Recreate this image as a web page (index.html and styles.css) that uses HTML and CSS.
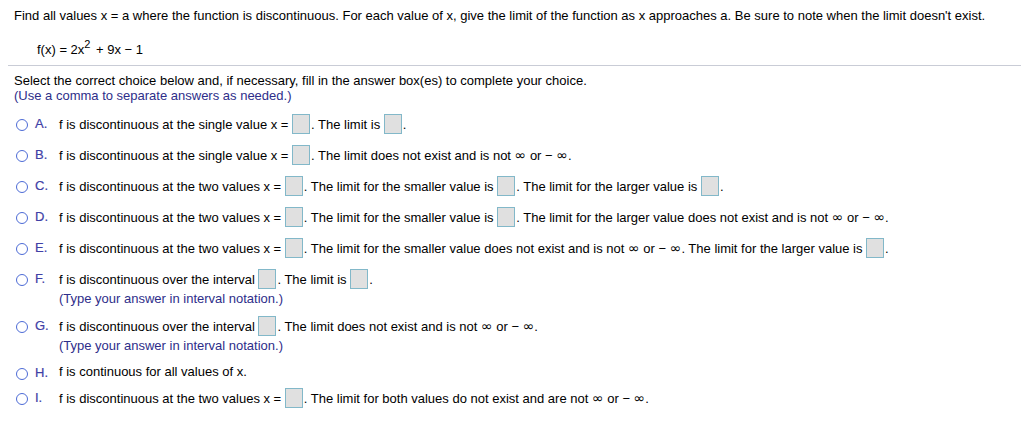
FILE: index.html
```html
<!DOCTYPE html>
<html>
<head>
<meta charset="utf-8">
<link rel="stylesheet" href="styles.css">
</head>
<body>
<div class="page">
  <p class="q">Find all values x = a where the function is discontinuous. For each value of x, give the limit of the function as x approaches a. Be sure to note when the limit doesn't exist.</p>
  <p class="fn">f(x) = 2x<sup>2</sup> + 9x − 1</p>
  <div class="sep"></div>
  <p class="inst">Select the correct choice below and, if necessary, fill in the answer box(es) to complete your choice.</p>
  <p class="note">(Use a comma to separate answers as needed.)</p>
  <ul class="choices">
    <li class="choice"><span class="radio"></span><span class="letter">A.</span>
      <div class="body"><div class="line">f is discontinuous at the single value x = <span class="box"></span>. The limit is <span class="box"></span>.</div></div></li>
    <li class="choice"><span class="radio"></span><span class="letter">B.</span>
      <div class="body"><div class="line">f is discontinuous at the single value x = <span class="box"></span>. The limit does not exist and is not <span class="inf">∞</span> or − <span class="inf">∞</span>.</div></div></li>
    <li class="choice"><span class="radio"></span><span class="letter">C.</span>
      <div class="body"><div class="line">f is discontinuous at the two values x = <span class="box"></span>. The limit for the smaller value is <span class="box"></span>. The limit for the larger value is <span class="box"></span>.</div></div></li>
    <li class="choice"><span class="radio"></span><span class="letter">D.</span>
      <div class="body"><div class="line">f is discontinuous at the two values x = <span class="box"></span>. The limit for the smaller value is <span class="box"></span>. The limit for the larger value does not exist and is not <span class="inf">∞</span> or − <span class="inf">∞</span>.</div></div></li>
    <li class="choice"><span class="radio"></span><span class="letter">E.</span>
      <div class="body"><div class="line">f is discontinuous at the two values x = <span class="box"></span>. The limit for the smaller value does not exist and is not <span class="inf">∞</span> or − <span class="inf">∞</span>. The limit for the larger value is <span class="box"></span>.</div></div></li>
    <li class="choice"><span class="radio"></span><span class="letter">F.</span>
      <div class="body"><div class="line">f is discontinuous over the interval <span class="box"></span>. The limit is <span class="box"></span>.</div>
      <div class="hint">(Type your answer in interval notation.)</div></div></li>
    <li class="choice"><span class="radio"></span><span class="letter">G.</span>
      <div class="body"><div class="line">f is discontinuous over the interval <span class="box"></span>. The limit does not exist and is not <span class="inf">∞</span> or − <span class="inf">∞</span>.</div>
      <div class="hint">(Type your answer in interval notation.)</div></div></li>
    <li class="choice short"><span class="radio"></span><span class="letter">H.</span>
      <div class="body"><div class="line plain">f is continuous for all values of x.</div></div></li>
    <li class="choice"><span class="radio"></span><span class="letter">I.</span>
      <div class="body"><div class="line">f is discontinuous at the two values x = <span class="box"></span>. The limit for both values do not exist and are not <span class="inf">∞</span> or − <span class="inf">∞</span>.</div></div></li>
  </ul>
</div>
</body>
</html>
```
FILE: styles.css
```css
* { box-sizing: border-box; }
html, body { margin: 0; padding: 0; background: #fff; }
body {
  font-family: "Liberation Sans", Arial, sans-serif;
  font-size: 13px;
  color: #000;
}
.page { padding: 8px 0 0 0; }
p { margin: 0; }
.q { padding-left: 14px; line-height: 15px; }
.fn { padding-left: 37px; margin-top: 19px; line-height: 15px; }
.fn sup { font-size: 11px; line-height: 0; vertical-align: 6px; margin-right: 2px; }
.sep { height: 1px; background: #c9ccd6; margin: 8px 0 0 8px; }
.inst { padding-left: 14px; margin-top: 7px; line-height: 15px; }
.note { padding-left: 14px; line-height: 15px; color: #2e2e8a; }
.choices { list-style: none; margin: 12px 0 0 0; padding: 0; }
.choice { display: flex; align-items: flex-start; padding-left: 16px; margin-bottom: 10px; }
.choice.short { margin-bottom: 7px; }
.radio {
  width: 12px; height: 12px; border: 1.5px solid #4d6bd6; border-radius: 50%;
  margin-top: 4px; flex: none;
}
.letter { width: 31px; padding-left: 7px; color: #4040a6; font-size: 13px; line-height: 18px; flex: none; -webkit-text-stroke: 0.2px #4040a6; }
.body { flex: 1; }
.line { height: 21px; line-height: 20px; white-space: nowrap; }
.line.plain { height: 16px; line-height: 16px; }
.box {
  display: inline-block; width: 18px; height: 20px; vertical-align: middle;
  background: #e0e0e0; border: 1px solid #82b8c9; margin: -3px 1px 0 0;
}
.inf { font-family: "DejaVu Sans", sans-serif; font-size: 14px; line-height: 0; }
.hint { height: 16px; line-height: 16px; color: #2e2e8a; }
```
